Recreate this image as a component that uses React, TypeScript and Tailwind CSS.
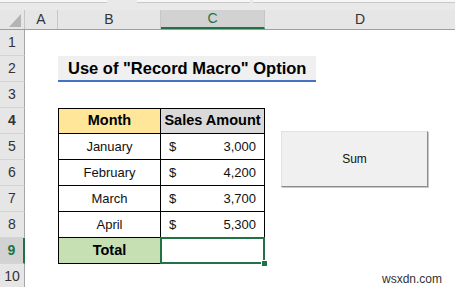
import React from 'react';

const font = { fontFamily: '"Liberation Sans", Arial, sans-serif' };

const rows = [
  { month: 'January', amount: '3,000' },
  { month: 'February', amount: '4,200' },
  { month: 'March', amount: '3,700' },
  { month: 'April', amount: '5,300' },
];

const RowHead: React.FC<{ n: number; active?: boolean }> = ({ n, active }) => (
  <div
    className={`w-[25px] shrink-0 flex items-center justify-center border-b border-b-[#d4d4d4] text-[14px] ${
      active
        ? 'bg-[#d2d2d2] text-[#217346] border-r-2 border-r-[#217346]'
        : 'bg-[#e6e6e6] text-[#333] border-r border-r-[#a6a6a6]'
    }`}
  >
    {n}
  </div>
);

const App: React.FC = () => {
  return (
    <div className="relative w-[455px] h-[287px] overflow-hidden bg-white" style={font}>
      {/* formula bar remnant */}
      <div className="flex h-[10px] bg-[#e9e9e9]">
        <div className="w-[107px] h-[3px] bg-[#f7f7f7] border-b border-[#c9c9c9]" />
        <div className="w-[30px]" />
        <div className="w-[113px] h-[3px] bg-[#f7f7f7] border-b border-[#c9c9c9]" />
        <div className="w-[3px]" />
        <div className="flex-1 h-[3px] bg-[#f7f7f7] border-b border-[#c9c9c9]" />
      </div>

      {/* column headers */}
      <div className="flex h-[20px] bg-[#e6e6e6] border-b border-[#9e9e9e] text-[14px] text-[#333]">
        <div className="w-[25px] shrink-0 flex items-end justify-end pr-[3px] pb-[2px] border-r border-[#c6c6c6]">
          <svg width="12" height="13" viewBox="0 0 12 13">
            <polygon points="12,0 12,13 0,13" fill="#b4b4b4" />
          </svg>
        </div>
        <div className="w-[33px] shrink-0 flex items-center justify-center border-r border-[#c6c6c6]">A</div>
        <div className="w-[103px] shrink-0 flex items-center justify-center border-r border-[#c6c6c6]">B</div>
        <div className="w-[104px] shrink-0 flex items-center justify-center bg-[#d2d2d2] text-[#217346] border-b-2 border-[#217346] border-r border-r-[#c6c6c6]">
          C
        </div>
        <div className="flex-1 flex items-center justify-center">D</div>
      </div>

      {/* row 1 */}
      <div className="flex h-[26px]">
        <RowHead n={1} />
      </div>

      {/* row 2 - title */}
      <div className="flex h-[26px]">
        <RowHead n={2} />
        <div className="w-[33px] shrink-0" />
        <div className="w-[258px] shrink-0 h-[26px] bg-[#f0f0f0] border-b-2 border-[#4472c4] flex items-center pl-[10px] text-[16.5px] font-bold text-black">
          Use of "Record Macro" Option
        </div>
      </div>

      {/* row 3 */}
      <div className="flex h-[26px]">
        <RowHead n={3} />
      </div>

      {/* row 4 - table header */}
      <div className="flex h-[26px] text-[14.5px] font-bold text-black">
        <RowHead n={4} />
        <div className="w-[33px] shrink-0" />
        <div className="w-[103px] shrink-0 flex items-center justify-center bg-[#ffe699] border border-black">
          Month
        </div>
        <div className="w-[104px] shrink-0 flex items-center justify-center bg-[#d9d9d9] border-t border-r border-b border-black">
          Sales Amount
        </div>
      </div>

      {rows.map((r, i) => (
        <div key={r.month} className="flex h-[26px] text-[13px] text-[#111]">
          <RowHead n={5 + i} />
          <div className="w-[33px] shrink-0" />
          <div className="w-[103px] shrink-0 flex items-center justify-center border-l border-r border-b border-black">
            {r.month}
          </div>
          <div className="w-[104px] shrink-0 flex items-center justify-between pl-[8px] pr-[8px] border-r border-b border-black">
            <span>$</span>
            <span>{r.amount}</span>
          </div>
        </div>
      ))}

      {/* row 9 - total */}
      <div className="flex h-[26px] text-[14.5px] font-bold text-black">
        <RowHead n={9} active />
        <div className="w-[33px] shrink-0" />
        <div className="w-[103px] shrink-0 flex items-center justify-center bg-[#c6e0b4] border-l border-r border-b border-black">
          Total
        </div>
        <div className="relative w-[104px] shrink-0 border-r border-b border-black">
          <div className="absolute -top-[1px] -left-[1px] w-[105px] h-[27px] border-2 border-[#217346]" />
          <div className="absolute -right-[4px] -bottom-[4px] w-[7px] h-[7px] bg-[#217346] border border-white" />
        </div>
      </div>

      {/* row 10 */}
      <div className="flex h-[26px]">
        <RowHead n={10} />
      </div>

      {/* form button shape */}
      <div className="absolute left-[281px] top-[131px] w-[147px] h-[56px] flex items-center justify-center bg-[#f0f0f0] border-t border-l border-[#e2e2e2] border-r border-r-[#8c8c8c] border-b border-b-[#8c8c8c] shadow-[1px_1px_0_#c8c8c8] text-[12px] text-[#111]">
        Sum
      </div>

      {/* watermark */}
      <div className="absolute left-[382px] top-[270px] text-[12px] text-[#333]">wsxdn.com</div>
    </div>
  );
};

export default App;
